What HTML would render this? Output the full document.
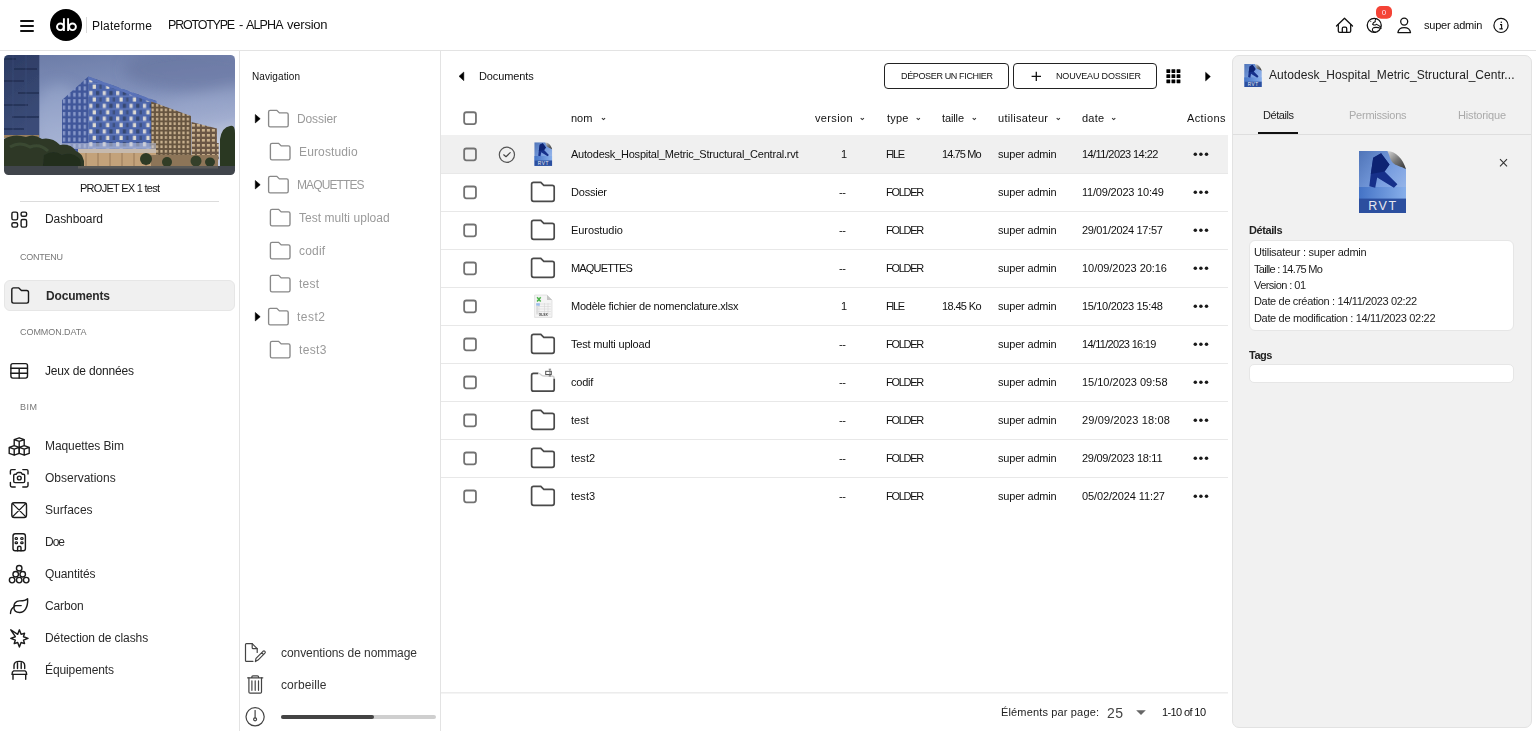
<!DOCTYPE html>
<html><head><meta charset="utf-8"><style>
html,body{margin:0;padding:0;}
body{width:1536px;height:731px;position:relative;overflow:hidden;background:#fff;font-family:"Liberation Sans",sans-serif;}
.t{position:absolute;white-space:nowrap;line-height:1;will-change:transform;}
svg{position:absolute;overflow:visible}
</style></head><body>
<div style="position:absolute;left:0;top:50px;width:1536px;height:1px;background:#e3e3e3"></div>
<div style="position:absolute;left:20px;top:20px;width:14px;height:2px;background:#111;border-radius:1px"></div>
<div style="position:absolute;left:20px;top:25px;width:14px;height:2px;background:#111;border-radius:1px"></div>
<div style="position:absolute;left:20px;top:30px;width:14px;height:2px;background:#111;border-radius:1px"></div>
<div style="position:absolute;left:50px;top:9px;width:32px;height:32px;border-radius:50%;background:#000"></div>
<svg width="40" height="40" style="position:absolute;left:46px;top:5px" viewBox="46 5 40 40"><g fill="none" stroke="#fff" stroke-width="1.9"><ellipse cx="60.4" cy="26.8" rx="3.4" ry="3.3"/><ellipse cx="72.5" cy="26.8" rx="3.4" ry="3.3"/><path d="M63.9 18.2 V31.1 M68.1 18.2 V31.1"/></g></svg>
<div style="position:absolute;left:86px;top:17px;width:1px;height:16px;background:#dadada"></div>
<div class="t" style="left:91.80px;top:19.54px;font-size:12px;color:#111;letter-spacing:0.219px;">Plateforme</div>
<div class="t" style="left:168.40px;top:18.72px;font-size:12.5px;color:#111;letter-spacing:-1.208px;">PROTOTYPE</div>
<div class="t" style="left:239.00px;top:18.30px;font-size:13px;color:#111;">-</div>
<div class="t" style="left:246.10px;top:18.72px;font-size:12.5px;color:#111;letter-spacing:-0.873px;">ALPHA</div>
<div class="t" style="left:287.20px;top:18.30px;font-size:13px;color:#111;letter-spacing:-0.218px;">version</div>
<div class="t" style="left:1423.50px;top:19.69px;font-size:11px;color:#111;letter-spacing:-0.213px;">super admin</div>
<div style="position:absolute;left:239px;top:51px;width:1px;height:680px;background:#e3e3e3"></div>
<div class="t" style="left:79.70px;top:182.69px;font-size:11px;color:#111;letter-spacing:-0.726px;">PROJET EX 1 test</div>
<div style="position:absolute;left:20px;top:201px;width:199px;height:1px;background:#dcdcdc"></div>
<div class="t" style="left:45.00px;top:213.44px;font-size:12px;color:#222;letter-spacing:-0.088px;">Dashboard</div>
<div class="t" style="left:19.90px;top:252.58px;font-size:9px;color:#777;letter-spacing:-0.250px;">CONTENU</div>
<div style="position:absolute;left:4px;top:280px;width:229px;height:29px;border:1px solid #e6e6e6;background:#f0f0f0;border-radius:6px"></div>
<div class="t" style="left:45.50px;top:289.64px;font-size:12px;color:#2a2a2a;letter-spacing:-0.168px;font-weight:bold;">Documents</div>
<div class="t" style="left:20.00px;top:327.88px;font-size:9px;color:#777;letter-spacing:-0.056px;">COMMON.DATA</div>
<div class="t" style="left:45.00px;top:365.24px;font-size:12px;color:#222;letter-spacing:-0.172px;">Jeux de données</div>
<div class="t" style="left:20.00px;top:402.98px;font-size:9px;color:#777;letter-spacing:0.500px;">BIM</div>
<div class="t" style="left:45.00px;top:440.14px;font-size:12px;color:#2a2a2a;letter-spacing:-0.095px;">Maquettes Bim</div>
<div class="t" style="left:45.00px;top:472.14px;font-size:12px;color:#2a2a2a;">Observations</div>
<div class="t" style="left:45.00px;top:504.14px;font-size:12px;color:#2a2a2a;letter-spacing:0.035px;">Surfaces</div>
<div class="t" style="left:45.00px;top:536.14px;font-size:12px;color:#2a2a2a;letter-spacing:-1.007px;">Doe</div>
<div class="t" style="left:45.00px;top:568.14px;font-size:12px;color:#2a2a2a;letter-spacing:-0.108px;">Quantités</div>
<div class="t" style="left:45.00px;top:600.14px;font-size:12px;color:#2a2a2a;letter-spacing:-0.152px;">Carbon</div>
<div class="t" style="left:45.00px;top:632.14px;font-size:12px;color:#2a2a2a;letter-spacing:-0.085px;">Détection de clashs</div>
<div class="t" style="left:45.00px;top:664.14px;font-size:12px;color:#2a2a2a;letter-spacing:-0.105px;">Équipements</div>
<div style="position:absolute;left:440px;top:51px;width:1px;height:680px;background:#e3e3e3"></div>
<div class="t" style="left:252.10px;top:71.63px;font-size:10px;color:#111;letter-spacing:0.083px;">Navigation</div>
<div class="t" style="left:297.00px;top:112.64px;font-size:12px;color:#9a9a9a;letter-spacing:-0.113px;">Dossier</div>
<div class="t" style="left:298.80px;top:145.64px;font-size:12px;color:#9a9a9a;letter-spacing:0.136px;">Eurostudio</div>
<div class="t" style="left:297.00px;top:178.64px;font-size:12px;color:#9a9a9a;letter-spacing:-0.884px;">MAQUETTES</div>
<div class="t" style="left:298.80px;top:211.64px;font-size:12px;color:#9a9a9a;letter-spacing:0.040px;">Test multi upload</div>
<div class="t" style="left:298.80px;top:244.64px;font-size:12px;color:#9a9a9a;letter-spacing:0.188px;">codif</div>
<div class="t" style="left:298.80px;top:277.64px;font-size:12px;color:#9a9a9a;letter-spacing:0.286px;">test</div>
<div class="t" style="left:297.00px;top:310.64px;font-size:12px;color:#9a9a9a;letter-spacing:0.471px;">test2</div>
<div class="t" style="left:298.80px;top:343.64px;font-size:12px;color:#9a9a9a;letter-spacing:0.346px;">test3</div>
<div class="t" style="left:281.00px;top:646.54px;font-size:12px;color:#333;letter-spacing:-0.068px;">conventions de nommage</div>
<div class="t" style="left:281.00px;top:678.64px;font-size:12px;color:#333;letter-spacing:0.088px;">corbeille</div>
<div style="position:absolute;left:281px;top:715px;width:155px;height:4px;background:#cfcfcf;border-radius:2px"></div>
<div style="position:absolute;left:281px;top:715px;width:93px;height:4px;background:#444;border-radius:2px"></div>
<div class="t" style="left:478.70px;top:70.69px;font-size:11px;color:#111;letter-spacing:-0.117px;">Documents</div>
<div style="position:absolute;left:884px;top:63px;width:123px;height:24px;border:1px solid #222;border-radius:4px"></div>
<div class="t" style="left:900.60px;top:71.98px;font-size:9px;color:#111;letter-spacing:-0.354px;">DÉPOSER UN FICHIER</div>
<div style="position:absolute;left:1013px;top:63px;width:142px;height:24px;border:1px solid #222;border-radius:4px"></div>
<div class="t" style="left:1055.90px;top:71.98px;font-size:9px;color:#111;letter-spacing:-0.180px;">NOUVEAU DOSSIER</div>
<div class="t" style="left:570.90px;top:112.59px;font-size:11px;color:#111;">nom</div>
<div class="t" style="left:815.00px;top:112.59px;font-size:11px;color:#111;letter-spacing:0.340px;">version</div>
<div class="t" style="left:886.60px;top:112.59px;font-size:11px;color:#111;letter-spacing:0.203px;">type</div>
<div class="t" style="left:942.30px;top:112.59px;font-size:11px;color:#111;letter-spacing:-0.125px;">taille</div>
<div class="t" style="left:998.30px;top:112.59px;font-size:11px;color:#111;letter-spacing:0.292px;">utilisateur</div>
<div class="t" style="left:1082.00px;top:112.59px;font-size:11px;color:#111;letter-spacing:0.197px;">date</div>
<div class="t" style="left:1186.70px;top:112.59px;font-size:11px;color:#111;letter-spacing:0.388px;">Actions</div>
<div style="position:absolute;left:441px;top:135px;width:787px;height:38px;background:#f0f0f0"></div>
<div style="position:absolute;left:441px;top:173px;width:787px;height:1px;background:#e8e8e8"></div>
<div class="t" style="left:570.90px;top:149.39px;font-size:11px;color:#111;letter-spacing:-0.222px;">Autodesk_Hospital_Metric_Structural_Central.rvt</div>
<div class="t" style="left:841.00px;top:149.39px;font-size:11px;color:#111;">1</div>
<div class="t" style="left:886.00px;top:149.39px;font-size:11px;color:#111;letter-spacing:-1.410px;">FILE</div>
<div class="t" style="left:942.30px;top:149.39px;font-size:11px;color:#111;letter-spacing:-0.895px;">14.75 Mo</div>
<div class="t" style="left:998.30px;top:149.39px;font-size:11px;color:#111;letter-spacing:-0.183px;">super admin</div>
<div class="t" style="left:1082.40px;top:149.39px;font-size:11px;color:#111;letter-spacing:-0.568px;">14/11/2023 14:22</div>
<div style="position:absolute;left:441px;top:211px;width:787px;height:1px;background:#e8e8e8"></div>
<div class="t" style="left:570.90px;top:187.39px;font-size:11px;color:#111;letter-spacing:-0.214px;">Dossier</div>
<div class="t" style="left:839.00px;top:187.39px;font-size:11px;color:#111;letter-spacing:-0.327px;">--</div>
<div class="t" style="left:886.00px;top:187.39px;font-size:11px;color:#111;letter-spacing:-1.264px;">FOLDER</div>
<div class="t" style="left:998.30px;top:187.39px;font-size:11px;color:#111;letter-spacing:-0.183px;">super admin</div>
<div class="t" style="left:1082.40px;top:187.39px;font-size:11px;color:#111;letter-spacing:-0.202px;">11/09/2023 10:49</div>
<div style="position:absolute;left:441px;top:249px;width:787px;height:1px;background:#e8e8e8"></div>
<div class="t" style="left:570.90px;top:225.39px;font-size:11px;color:#111;letter-spacing:-0.077px;">Eurostudio</div>
<div class="t" style="left:839.00px;top:225.39px;font-size:11px;color:#111;letter-spacing:-0.327px;">--</div>
<div class="t" style="left:886.00px;top:225.39px;font-size:11px;color:#111;letter-spacing:-1.264px;">FOLDER</div>
<div class="t" style="left:998.30px;top:225.39px;font-size:11px;color:#111;letter-spacing:-0.183px;">super admin</div>
<div class="t" style="left:1082.40px;top:225.39px;font-size:11px;color:#111;letter-spacing:-0.323px;">29/01/2024 17:57</div>
<div style="position:absolute;left:441px;top:287px;width:787px;height:1px;background:#e8e8e8"></div>
<div class="t" style="left:570.90px;top:263.39px;font-size:11px;color:#111;letter-spacing:-0.819px;">MAQUETTES</div>
<div class="t" style="left:839.00px;top:263.39px;font-size:11px;color:#111;letter-spacing:-0.327px;">--</div>
<div class="t" style="left:886.00px;top:263.39px;font-size:11px;color:#111;letter-spacing:-1.264px;">FOLDER</div>
<div class="t" style="left:998.30px;top:263.39px;font-size:11px;color:#111;letter-spacing:-0.183px;">super admin</div>
<div class="t" style="left:1082.40px;top:263.39px;font-size:11px;color:#111;letter-spacing:-0.043px;">10/09/2023 20:16</div>
<div style="position:absolute;left:441px;top:325px;width:787px;height:1px;background:#e8e8e8"></div>
<div class="t" style="left:570.90px;top:301.39px;font-size:11px;color:#111;letter-spacing:-0.235px;">Modèle fichier de nomenclature.xlsx</div>
<div class="t" style="left:841.00px;top:301.39px;font-size:11px;color:#111;">1</div>
<div class="t" style="left:886.00px;top:301.39px;font-size:11px;color:#111;letter-spacing:-1.410px;">FILE</div>
<div class="t" style="left:942.30px;top:301.39px;font-size:11px;color:#111;letter-spacing:-0.634px;">18.45 Ko</div>
<div class="t" style="left:998.30px;top:301.39px;font-size:11px;color:#111;letter-spacing:-0.183px;">super admin</div>
<div class="t" style="left:1082.40px;top:301.39px;font-size:11px;color:#111;letter-spacing:-0.323px;">15/10/2023 15:48</div>
<div style="position:absolute;left:441px;top:363px;width:787px;height:1px;background:#e8e8e8"></div>
<div class="t" style="left:570.90px;top:339.39px;font-size:11px;color:#111;letter-spacing:-0.184px;">Test multi upload</div>
<div class="t" style="left:839.00px;top:339.39px;font-size:11px;color:#111;letter-spacing:-0.327px;">--</div>
<div class="t" style="left:886.00px;top:339.39px;font-size:11px;color:#111;letter-spacing:-1.264px;">FOLDER</div>
<div class="t" style="left:998.30px;top:339.39px;font-size:11px;color:#111;letter-spacing:-0.183px;">super admin</div>
<div class="t" style="left:1082.40px;top:339.39px;font-size:11px;color:#111;letter-spacing:-0.695px;">14/11/2023 16:19</div>
<div style="position:absolute;left:441px;top:401px;width:787px;height:1px;background:#e8e8e8"></div>
<div class="t" style="left:570.90px;top:377.39px;font-size:11px;color:#111;letter-spacing:-0.209px;">codif</div>
<div class="t" style="left:839.00px;top:377.39px;font-size:11px;color:#111;letter-spacing:-0.327px;">--</div>
<div class="t" style="left:886.00px;top:377.39px;font-size:11px;color:#111;letter-spacing:-1.264px;">FOLDER</div>
<div class="t" style="left:998.30px;top:377.39px;font-size:11px;color:#111;letter-spacing:-0.183px;">super admin</div>
<div class="t" style="left:1082.40px;top:377.39px;font-size:11px;color:#111;letter-spacing:-0.009px;">15/10/2023 09:58</div>
<div style="position:absolute;left:441px;top:439px;width:787px;height:1px;background:#e8e8e8"></div>
<div class="t" style="left:570.90px;top:415.39px;font-size:11px;color:#111;letter-spacing:0.057px;">test</div>
<div class="t" style="left:839.00px;top:415.39px;font-size:11px;color:#111;letter-spacing:-0.327px;">--</div>
<div class="t" style="left:886.00px;top:415.39px;font-size:11px;color:#111;letter-spacing:-1.264px;">FOLDER</div>
<div class="t" style="left:998.30px;top:415.39px;font-size:11px;color:#111;letter-spacing:-0.183px;">super admin</div>
<div class="t" style="left:1082.40px;top:415.39px;font-size:11px;color:#111;letter-spacing:0.151px;">29/09/2023 18:08</div>
<div style="position:absolute;left:441px;top:477px;width:787px;height:1px;background:#e8e8e8"></div>
<div class="t" style="left:570.90px;top:453.39px;font-size:11px;color:#111;letter-spacing:0.088px;">test2</div>
<div class="t" style="left:839.00px;top:453.39px;font-size:11px;color:#111;letter-spacing:-0.327px;">--</div>
<div class="t" style="left:886.00px;top:453.39px;font-size:11px;color:#111;letter-spacing:-1.264px;">FOLDER</div>
<div class="t" style="left:998.30px;top:453.39px;font-size:11px;color:#111;letter-spacing:-0.183px;">super admin</div>
<div class="t" style="left:1082.40px;top:453.39px;font-size:11px;color:#111;letter-spacing:-0.288px;">29/09/2023 18:11</div>
<div class="t" style="left:570.90px;top:491.39px;font-size:11px;color:#111;letter-spacing:0.088px;">test3</div>
<div class="t" style="left:839.00px;top:491.39px;font-size:11px;color:#111;letter-spacing:-0.327px;">--</div>
<div class="t" style="left:886.00px;top:491.39px;font-size:11px;color:#111;letter-spacing:-1.264px;">FOLDER</div>
<div class="t" style="left:998.30px;top:491.39px;font-size:11px;color:#111;letter-spacing:-0.183px;">super admin</div>
<div class="t" style="left:1082.40px;top:491.39px;font-size:11px;color:#111;letter-spacing:-0.122px;">05/02/2024 11:27</div>
<div style="position:absolute;left:441px;top:692px;width:787px;height:1px;background:#ececec"></div><div style="position:absolute;left:441px;top:693px;width:787px;height:1px;background:#f4f4f4"></div>
<div class="t" style="left:1001.00px;top:707.39px;font-size:11px;color:#222;letter-spacing:0.153px;">Éléments par page:</div>
<div class="t" style="left:1107.30px;top:705.55px;font-size:14px;color:#444;letter-spacing:0.428px;">25</div>
<div class="t" style="left:1161.50px;top:707.39px;font-size:11px;color:#111;letter-spacing:-0.616px;">1-10 of 10</div>
<div style="position:absolute;left:1232px;top:55px;width:298px;height:671px;background:#f1f1f1;border:1px solid #e2e2e2;border-radius:7px"></div>
<div class="t" style="left:1269.20px;top:68.64px;font-size:12px;color:#222;letter-spacing:0.063px;">Autodesk_Hospital_Metric_Structural_Centr...</div>
<div class="t" style="left:1262.70px;top:109.59px;font-size:11px;color:#222;letter-spacing:-0.437px;">Détails</div>
<div class="t" style="left:1349.00px;top:109.59px;font-size:11px;color:#aaa;letter-spacing:-0.240px;">Permissions</div>
<div class="t" style="left:1457.80px;top:109.59px;font-size:11px;color:#aaa;letter-spacing:-0.169px;">Historique</div>
<div style="position:absolute;left:1233px;top:134px;width:298px;height:1px;background:#dedede"></div>
<div style="position:absolute;left:1258px;top:132px;width:40px;height:2px;background:#111"></div>
<div class="t" style="left:1249.00px;top:225.29px;font-size:11px;color:#222;letter-spacing:-0.429px;font-weight:bold;">Détails</div>
<div style="position:absolute;left:1249px;top:240px;width:263px;height:89px;background:#fff;border:1px solid #e6e6e6;border-radius:6px"></div>
<div class="t" style="left:1253.60px;top:247.29px;font-size:11px;color:#222;letter-spacing:-0.250px;">Utilisateur : super admin</div>
<div class="t" style="left:1253.60px;top:263.69px;font-size:11px;color:#222;letter-spacing:-0.700px;">Taille : 14.75 Mo</div>
<div class="t" style="left:1253.60px;top:280.09px;font-size:11px;color:#222;letter-spacing:-0.554px;">Version : 01</div>
<div class="t" style="left:1253.60px;top:296.49px;font-size:11px;color:#222;letter-spacing:-0.339px;">Date de création : 14/11/2023 02:22</div>
<div class="t" style="left:1253.60px;top:312.89px;font-size:11px;color:#222;letter-spacing:-0.336px;">Date de modification : 14/11/2023 02:22</div>
<div class="t" style="left:1249.00px;top:350.19px;font-size:11px;color:#222;letter-spacing:-0.486px;font-weight:bold;">Tags</div>
<div style="position:absolute;left:1249px;top:364px;width:263px;height:17px;background:#fff;border:1px solid #e6e6e6;border-radius:5px"></div>
<svg width="231" height="120" viewBox="0 0 231 120" style="position:absolute;left:4px;top:55px">
<defs>
<filter id="cblur" x="-50%" y="-50%" width="200%" height="200%"><feGaussianBlur stdDeviation="7"/></filter>
<filter id="sblur"><feGaussianBlur stdDeviation="0.35"/></filter>
<clipPath id="bclip"><rect x="0" y="0" width="231" height="120" rx="4.5"/></clipPath>
<linearGradient id="sky" x1="0" y1="0" x2="0.25" y2="1">
 <stop offset="0" stop-color="#6b7ba6"/><stop offset="0.4" stop-color="#8191bb"/><stop offset="0.72" stop-color="#a2aed0"/><stop offset="0.9" stop-color="#c3cadc"/>
</linearGradient>
<linearGradient id="tower" x1="0" y1="0" x2="0.3" y2="1">
 <stop offset="0" stop-color="#2c3b63"/><stop offset="1" stop-color="#3b4c78"/>
</linearGradient>
<pattern id="winB" patternUnits="userSpaceOnUse" width="13.4" height="12.8" x="84.3" y="22">
 <rect width="13.4" height="12.8" fill="#4d66ab"/>
 <rect x="1" y="1.2" width="3.2" height="4.2" fill="#d8d6d6"/>
 <rect x="7.7" y="1.2" width="3.2" height="4.2" fill="#35466e"/>
 <rect x="4.4" y="7.6" width="3.2" height="4.2" fill="#e0dcd2"/>
 <rect x="11" y="7.6" width="2.4" height="4.2" fill="#3d4f7c"/>
 <rect x="0" y="5.8" width="13.4" height="0.8" fill="#6b83c4"/>
</pattern>
<pattern id="winBL" patternUnits="userSpaceOnUse" width="5.2" height="6.4" x="58" y="24">
 <rect width="5.2" height="6.4" fill="#40579a"/>
 <rect x="0.8" y="1" width="2.4" height="4" fill="#8697c8"/>
</pattern>
<pattern id="winW" patternUnits="userSpaceOnUse" width="4.4" height="4.6" x="151" y="48">
 <rect width="4.4" height="4.6" fill="#66543f"/>
 <rect x="1" y="0.9" width="2.2" height="2.8" fill="#c9b290"/>
</pattern>
<pattern id="winW2" patternUnits="userSpaceOnUse" width="5" height="5" x="187" y="68">
 <rect width="5" height="5" fill="#6a5645"/>
 <rect x="0.9" y="1" width="3" height="2.6" fill="#c8b08c"/>
</pattern>
</defs>
<g clip-path="url(#bclip)"><g filter="url(#sblur)">
<rect width="231" height="120" fill="url(#sky)"/>
<g filter="url(#cblur)"><ellipse cx="190" cy="15" rx="70" ry="22" fill="#5f6d96" opacity="0.45"/>
<ellipse cx="55" cy="60" rx="25" ry="30" fill="#a8b6d8" opacity="0.45"/>
<ellipse cx="200" cy="48" rx="40" ry="8" fill="#9aa8cc" opacity="0.4" transform="rotate(-18 200 48)"/></g>
<rect x="0" y="0" width="35.3" height="82.5" fill="url(#tower)"/>
<path d="M0 4 H12 M10 14 H33 M0 26 H20 M14 38 H35 M0 50 H24 M8 62 H35 M0 74 H20" stroke="#1e2a4c" stroke-width="1.5" opacity="0.8"/>
<path d="M9 0 V82 M22 0 V82" stroke="#40517f" stroke-width="0.7" opacity="0.7"/>
<rect x="0" y="80" width="35" height="3" fill="#9a8060"/>
<polygon points="58,45 84.3,21.5 84.3,100 58,93.5" fill="url(#winBL)"/>
<polygon points="84.3,21.5 152.3,46 152.3,101 84.3,100" fill="url(#winB)"/>
<polygon points="84.3,21.5 152.3,46 152.3,49 84.3,24.5" fill="#5a72b8"/>
<polygon points="147.2,46.4 187,60.9 187,110 147.2,110" fill="url(#winW)"/>
<polygon points="187.6,66.9 212.9,73.5 212.9,88 214.7,88 214.7,105 187.6,110" fill="url(#winW2)"/>
<rect x="58" y="88" width="94" height="6" fill="#c4cade" opacity="0.55"/>
<rect x="74" y="94" width="78" height="18" fill="#c3a27a"/>
<rect x="74" y="94" width="78" height="4" fill="#c8c4c4" opacity="0.7"/>
<path d="M82 98 V112 M94 98 V112 M106 98 V112 M118 98 V112 M130 98 V112 M142 98 V112" stroke="#8d7050" stroke-width="0.8"/>
<rect x="147" y="100" width="67" height="11" fill="#8d7558"/>
<path d="M0 84 Q10 78 22 82 Q30 78 38 84 Q48 82 56 90 Q66 88 72 96 Q78 98 80 106 L80 120 H0 Z" fill="#2d3928"/>
<path d="M6 92 Q16 86 26 92 Q36 88 44 96" stroke="#44533a" stroke-width="3" fill="none" opacity="0.6"/>
<path d="M40 100 Q50 94 58 100 Q68 96 76 104 L78 120 H38 Z" fill="#232d1f"/>
<ellipse cx="142" cy="104" rx="6" ry="6" fill="#2f3b27"/>
<ellipse cx="163" cy="107" rx="5" ry="5" fill="#313d28"/>
<ellipse cx="192" cy="106" rx="5.5" ry="5.5" fill="#34402a"/>
<ellipse cx="206" cy="107" rx="5" ry="4.5" fill="#2f3b27"/>
<path d="M216 120 V84 Q218 72 226 71 Q231 69 231 78 V120 Z" fill="#2c3824"/>
<rect x="0" y="111" width="231" height="9" fill="#40444c"/>
<rect x="74" y="111" width="140" height="2.5" fill="#5a5a58"/>
</g></g>
</svg>
<svg width="1536" height="731" style="position:absolute;left:0;top:0"><defs>
<linearGradient id="rvtBody" x1="0" y1="0" x2="1" y2="1">
 <stop offset="0" stop-color="#4f74b8"/><stop offset="0.5" stop-color="#7a9fe0"/><stop offset="1" stop-color="#a9c4ef"/>
</linearGradient>
<linearGradient id="rvtLow" x1="0" y1="0" x2="1" y2="0">
 <stop offset="0" stop-color="#3f6fc4"/><stop offset="1" stop-color="#86aeea"/>
</linearGradient>
<linearGradient id="rvtFold" x1="0" y1="0" x2="1" y2="1">
 <stop offset="0" stop-color="#d8d8d8"/><stop offset="0.5" stop-color="#777"/><stop offset="1" stop-color="#333"/>
</linearGradient>
<symbol id="rvt" viewBox="0 0 47 62">
 <path d="M0 0 H28.5 L47 18 V62 H0 Z" fill="url(#rvtBody)"/>
 <rect x="0" y="36" width="47" height="12" fill="url(#rvtLow)" opacity="0.9"/>
 <rect x="0" y="47.6" width="47" height="14.4" fill="#2c4f9f"/>
 <path d="M28.5 0 C37 0.5 44 8 47 18 C42 15.5 36.5 14.5 34 12 C31 9 30.5 4 28.5 0 Z" fill="url(#rvtFold)"/>
 <path d="M14.2 6.7 L22.1 2.3 L30.5 13.6 L25.6 20.5 L38.4 33.3 L34.9 36.8 L18.2 26.4 L16.2 36.8 L10.3 35.3 L11.8 22.9 Z" fill="#16308a"/>
 <path d="M14.2 6.7 L22.1 2.3 L30.5 13.6 L25.6 20.5 L11.8 22.9 Z" fill="#0d2373"/>
 <text x="24" y="59" font-family="Liberation Sans" font-size="12.5" fill="#e8e8f0" text-anchor="middle" letter-spacing="1.6">RVT</text>
</symbol>
</defs><g fill="none" stroke-linecap="round" stroke-linejoin="round" stroke="#111" stroke-width="1.3"><path d="M1336.5 26 L1344.5 18.3 L1352.5 26"/><path d="M1338.3 24.5 V31 Q1338.3 32.4 1339.7 32.4 H1349.3 Q1350.7 32.4 1350.7 31 V24.5"/><path d="M1342.3 32.4 V28.6 Q1342.3 27.2 1343.5 27.2 H1345.5 Q1346.7 27.2 1346.7 28.6 V32.4"/><circle cx="1374.25" cy="25.35" r="7.0"/><path d="M1376 18.6 Q1374.5 20.5 1375.3 21.6 Q1373 22.2 1372.6 24.3 Q1374.5 25.8 1376.3 24.3 Q1378.5 25.2 1380.8 27" stroke-width="1.1"/><path d="M1381 28.5 Q1377 26.8 1374 27.6 Q1371.4 29 1373 31.2 Q1374.5 32.2 1375.5 32.4" stroke-width="1.1"/><circle cx="1370.8" cy="21.6" r="0.5" fill="#111" stroke="none"/><circle cx="1404.2" cy="21.6" r="3.5"/><path d="M1397.9 32.6 Q1398.5 27.6 1404.2 27.6 Q1409.9 27.6 1410.5 32.6 Z"/><circle cx="1501" cy="25.4" r="7.1" stroke-width="1.2"/></g><path d="M1500 24.6 H1501.6 V28.6 M1499.4 28.9 H1502.8" stroke="#111" stroke-width="1.1" fill="none"/><circle cx="1501.3" cy="22.3" r="0.75" fill="#111"/><rect x="1376" y="6" width="16" height="12.8" rx="5" fill="#f44336"/><text x="1384" y="15" font-family="Liberation Sans" font-size="8" fill="#fde" text-anchor="middle">0</text><g fill="none" stroke-linecap="round" stroke-linejoin="round" stroke="#1a1a1a" stroke-width="1.4"><rect x="11.9" y="212.1" width="5.7" height="7.8" rx="1.6"/><rect x="21.1" y="212.1" width="5.5" height="4.1" rx="1.5"/><rect x="11.9" y="222.8" width="5.7" height="4.3" rx="1.5"/><rect x="21.1" y="219.5" width="5.5" height="7.6" rx="1.6"/><path d="M11.8 301.3 V289.7 Q11.8 287.9 13.600000000000001 287.9 H18.8 L21.400000000000002 290.5 H26.7 Q28.5 290.5 28.5 292.3 V301.3 Q28.5 303.1 26.7 303.1 H13.600000000000001 Q11.8 303.1 11.8 301.3 Z"/><rect x="10.9" y="363.6" width="16.6" height="14.5" rx="2"/><path d="M10.9 368.2 H27.5 M10.9 373.3 H27.5 M19.2 368.2 V378.1"/><path d="M14.2 439.6 L19.2 437.8 L24.2 439.6 L19.2 441.40000000000003 Z M14.2 439.6 V445.1 M24.2 439.6 V445.1 M19.2 441.40000000000003 V447.40000000000003"/><path d="M9.2 447.40000000000003 L14.2 445.6 L19.2 447.40000000000003 L14.2 449.20000000000005 Z M9.2 447.40000000000003 V453.40000000000003 L14.2 455.20000000000005 L19.2 453.40000000000003 V447.40000000000003 M14.2 449.20000000000005 V455.20000000000005"/><path d="M19.2 447.40000000000003 L24.2 445.6 L29.2 447.40000000000003 L24.2 449.20000000000005 Z M19.2 447.40000000000003 V453.40000000000003 L24.2 455.20000000000005 L29.2 453.40000000000003 V447.40000000000003 M24.2 449.20000000000005 V455.20000000000005"/><path d="M10.4 474 V471 Q10.4 469.6 11.8 469.6 H15.2 M22.8 469.6 H26.6 Q28 469.6 28 471 V474 M10.4 482.5 V485.6 Q10.4 487 11.8 487 H15.2 M22.8 487 H26.6 Q28 487 28 485.6 V482.5"/><path d="M13.7 475.6 Q13.7 474.3 15 474.3 H16.3 Q17 472.5 18.2 472.5 H20.4 Q21.6 472.5 22.2 474.3 H23.4 Q24.7 474.3 24.7 475.6 V481.3 Q24.7 482.6 23.4 482.6 H15 Q13.7 482.6 13.7 481.3 Z"/><circle cx="19.3" cy="478" r="1.9"/><rect x="11.8" y="502.8" width="14.7" height="14.7" rx="2.4"/><path d="M12.4 503.4 L25.9 516.9 M25.9 503.4 L12.4 516.9" stroke-width="1.2"/><rect x="13" y="533.7" width="12.4" height="17" rx="2.2"/><path d="M17.6 550.7 V547.6 Q17.6 546.3 19.3 546.3 Q21 546.3 21 547.6 V550.7"/><rect x="15.100000000000001" y="537.5" width="2.4" height="1.8" rx="0.9" stroke-width="1.2"/><rect x="20.7" y="537.5" width="2.4" height="1.8" rx="0.9" stroke-width="1.2"/><rect x="15.100000000000001" y="541.9" width="2.4" height="1.8" rx="0.9" stroke-width="1.2"/><rect x="20.7" y="541.9" width="2.4" height="1.8" rx="0.9" stroke-width="1.2"/><circle cx="19.2" cy="568.3" r="2.75"/><circle cx="15.7" cy="574.2" r="2.75"/><circle cx="22.7" cy="574.2" r="2.75"/><circle cx="12.1" cy="580.1" r="2.75"/><circle cx="19.2" cy="580.1" r="2.75"/><circle cx="26.2" cy="580.1" r="2.75"/><path d="M27.6 598.8 C25.5 601 22.5 600.9 19.5 600.9 C15.8 601 13.6 603.8 13.8 607.2 C14 610.6 16.6 612.5 19.6 612.5 C24.5 612.4 28.2 607.5 27.6 598.8 Z"/><path d="M14.5 605.6 H21.2 M14.6 606.6 C11.8 607.8 10.5 610.8 10.5 613.6"/><path d="M19.40 629.80 L21.08 634.33 L24.56 633.24 L23.47 636.72 L28.00 638.40 L23.47 640.08 L24.56 643.56 L21.08 642.47 L19.40 647.00 L17.72 642.47 L14.24 643.56 L15.33 640.08 L10.80 638.40 L15.33 636.72 L10.77 629.77 L17.72 634.33 Z" stroke-width="1.4"/><path d="M14 668.5 V665.5 Q14 661.4 19.35 661.4 Q24.7 661.4 24.7 665.5 V668.5 M17.5 663 V668.5 M21.2 663 V668.5"/><path d="M13.6 670.9 H25.1 Q26.7 671.6 26.7 674.4 H12 Q12 671.6 13.6 670.9 Z"/><path d="M13 674.5 V679.2 M25.7 674.5 V679.2"/></g><path d="M255.3 114.5 L260.2 118.7 L255.3 122.9 Z" fill="#000" stroke="#000" stroke-width="0.6" stroke-linejoin="round"/><path d="M268.6 125.30000000000001 V111.89999999999999 Q268.6 110.3 270.20000000000005 110.3 H276.8 L279.40000000000003 112.89999999999999 H286.6 Q288.20000000000005 112.89999999999999 288.20000000000005 114.49999999999999 V125.30000000000001 Q288.20000000000005 126.9 286.6 126.9 H270.20000000000005 Q268.6 126.9 268.6 125.30000000000001 Z" fill="none" stroke="#888" stroke-width="1.35"/><path d="M270.4 158.29999999999998 V144.89999999999998 Q270.4 143.29999999999998 272.0 143.29999999999998 H278.59999999999997 L281.2 145.89999999999998 H288.4 Q290.0 145.89999999999998 290.0 147.49999999999997 V158.29999999999998 Q290.0 159.89999999999998 288.4 159.89999999999998 H272.0 Q270.4 159.89999999999998 270.4 158.29999999999998 Z" fill="none" stroke="#888" stroke-width="1.35"/><path d="M255.3 180.5 L260.2 184.7 L255.3 188.89999999999998 Z" fill="#000" stroke="#000" stroke-width="0.6" stroke-linejoin="round"/><path d="M268.6 191.29999999999998 V177.89999999999998 Q268.6 176.29999999999998 270.20000000000005 176.29999999999998 H276.8 L279.40000000000003 178.89999999999998 H286.6 Q288.20000000000005 178.89999999999998 288.20000000000005 180.49999999999997 V191.29999999999998 Q288.20000000000005 192.89999999999998 286.6 192.89999999999998 H270.20000000000005 Q268.6 192.89999999999998 268.6 191.29999999999998 Z" fill="none" stroke="#888" stroke-width="1.35"/><path d="M270.4 224.29999999999998 V210.89999999999998 Q270.4 209.29999999999998 272.0 209.29999999999998 H278.59999999999997 L281.2 211.89999999999998 H288.4 Q290.0 211.89999999999998 290.0 213.49999999999997 V224.29999999999998 Q290.0 225.89999999999998 288.4 225.89999999999998 H272.0 Q270.4 225.89999999999998 270.4 224.29999999999998 Z" fill="none" stroke="#888" stroke-width="1.35"/><path d="M270.4 257.29999999999995 V243.89999999999998 Q270.4 242.29999999999998 272.0 242.29999999999998 H278.59999999999997 L281.2 244.89999999999998 H288.4 Q290.0 244.89999999999998 290.0 246.49999999999997 V257.29999999999995 Q290.0 258.9 288.4 258.9 H272.0 Q270.4 258.9 270.4 257.29999999999995 Z" fill="none" stroke="#888" stroke-width="1.35"/><path d="M270.4 290.29999999999995 V276.90000000000003 Q270.4 275.3 272.0 275.3 H278.59999999999997 L281.2 277.90000000000003 H288.4 Q290.0 277.90000000000003 290.0 279.50000000000006 V290.29999999999995 Q290.0 291.9 288.4 291.9 H272.0 Q270.4 291.9 270.4 290.29999999999995 Z" fill="none" stroke="#888" stroke-width="1.35"/><path d="M255.3 312.5 L260.2 316.7 L255.3 320.9 Z" fill="#000" stroke="#000" stroke-width="0.6" stroke-linejoin="round"/><path d="M268.6 323.29999999999995 V309.90000000000003 Q268.6 308.3 270.20000000000005 308.3 H276.8 L279.40000000000003 310.90000000000003 H286.6 Q288.20000000000005 310.90000000000003 288.20000000000005 312.50000000000006 V323.29999999999995 Q288.20000000000005 324.9 286.6 324.9 H270.20000000000005 Q268.6 324.9 268.6 323.29999999999995 Z" fill="none" stroke="#888" stroke-width="1.35"/><path d="M270.4 356.29999999999995 V342.90000000000003 Q270.4 341.3 272.0 341.3 H278.59999999999997 L281.2 343.90000000000003 H288.4 Q290.0 343.90000000000003 290.0 345.50000000000006 V356.29999999999995 Q290.0 357.9 288.4 357.9 H272.0 Q270.4 357.9 270.4 356.29999999999995 Z" fill="none" stroke="#888" stroke-width="1.35"/><g fill="none" stroke-linecap="round" stroke-linejoin="round" stroke="#444" stroke-width="1.2"><path d="M253 661.3 H246.4 Q245.5 661.3 245.5 660.4 V644.6 Q245.5 643.7 246.4 643.7 H252.2 L257.2 648.7 V652.5"/><path d="M252.2 643.7 V647.8 Q252.2 648.7 253.1 648.7 H257.2"/><path d="M255.4 661.6 L256 658.3 L263 651.3 Q264 650.4 264.9 651.3 Q265.8 652.2 264.9 653.2 L258 660.1 Z M261.6 652.7 L263.5 654.6"/><path d="M247.6 677.8 H262.8 M251.8 677.8 V677 Q251.8 675.8 253 675.8 H257.4 Q258.6 675.8 258.6 677 V677.8"/><path d="M248.9 677.8 V692 Q248.9 693.2 250.1 693.2 H260.3 Q261.5 693.2 261.5 692 V677.8"/><path d="M251.9 680.8 V690.3 M255.2 680.8 V690.3 M258.5 680.8 V690.3"/><circle cx="255.1" cy="716.8" r="9.1"/><path d="M255.1 710.6 V717.8"/><circle cx="255.1" cy="719.3" r="1.5"/></g><path d="M463.8 72 L459 76.3 L463.8 80.7 Z" fill="#000" stroke="#000" stroke-width="0.5" stroke-linejoin="round"/><path d="M1031.6 76.4 H1041 M1036.3 71.8 V81" stroke="#111" stroke-width="1.3"/><rect x="1166.4" y="69.2" width="3.8" height="3.8" rx="0.4" fill="#000"/><rect x="1171.5" y="69.2" width="3.8" height="3.8" rx="0.4" fill="#000"/><rect x="1176.6000000000001" y="69.2" width="3.8" height="3.8" rx="0.4" fill="#000"/><rect x="1166.4" y="74.3" width="3.8" height="3.8" rx="0.4" fill="#000"/><rect x="1171.5" y="74.3" width="3.8" height="3.8" rx="0.4" fill="#000"/><rect x="1176.6000000000001" y="74.3" width="3.8" height="3.8" rx="0.4" fill="#000"/><rect x="1166.4" y="79.4" width="3.8" height="3.8" rx="0.4" fill="#000"/><rect x="1171.5" y="79.4" width="3.8" height="3.8" rx="0.4" fill="#000"/><rect x="1176.6000000000001" y="79.4" width="3.8" height="3.8" rx="0.4" fill="#000"/><path d="M1205.6 72.3 L1210.4 76.6 L1205.6 80.9 Z" fill="#000" stroke="#000" stroke-width="0.5" stroke-linejoin="round"/><path d="M601.9 118.2 L603.5 119.6 L605.1 118.2" fill="none" stroke="#333" stroke-width="1.1"/><path d="M860.6999999999999 118.2 L862.3 119.6 L863.9 118.2" fill="none" stroke="#333" stroke-width="1.1"/><path d="M916.6999999999999 118.2 L918.3 119.6 L919.9 118.2" fill="none" stroke="#333" stroke-width="1.1"/><path d="M972.6999999999999 118.2 L974.3 119.6 L975.9 118.2" fill="none" stroke="#333" stroke-width="1.1"/><path d="M1056.7 118.2 L1058.3 119.6 L1059.8999999999999 118.2" fill="none" stroke="#333" stroke-width="1.1"/><path d="M1112.1000000000001 118.2 L1113.7 119.6 L1115.3 118.2" fill="none" stroke="#333" stroke-width="1.1"/><rect x="464.15" y="112.25" width="11.8" height="11.8" rx="2.2" fill="none" stroke="#727272" stroke-width="1.8"/><rect x="464.15" y="148.50" width="11.8" height="11.8" rx="2.2" fill="none" stroke="#727272" stroke-width="1.8"/><rect x="464.15" y="186.50" width="11.8" height="11.8" rx="2.2" fill="none" stroke="#727272" stroke-width="1.8"/><rect x="464.15" y="224.50" width="11.8" height="11.8" rx="2.2" fill="none" stroke="#727272" stroke-width="1.8"/><rect x="464.15" y="262.50" width="11.8" height="11.8" rx="2.2" fill="none" stroke="#727272" stroke-width="1.8"/><rect x="464.15" y="300.50" width="11.8" height="11.8" rx="2.2" fill="none" stroke="#727272" stroke-width="1.8"/><rect x="464.15" y="338.50" width="11.8" height="11.8" rx="2.2" fill="none" stroke="#727272" stroke-width="1.8"/><rect x="464.15" y="376.50" width="11.8" height="11.8" rx="2.2" fill="none" stroke="#727272" stroke-width="1.8"/><rect x="464.15" y="414.50" width="11.8" height="11.8" rx="2.2" fill="none" stroke="#727272" stroke-width="1.8"/><rect x="464.15" y="452.50" width="11.8" height="11.8" rx="2.2" fill="none" stroke="#727272" stroke-width="1.8"/><rect x="464.15" y="490.50" width="11.8" height="11.8" rx="2.2" fill="none" stroke="#727272" stroke-width="1.8"/><circle cx="506.9" cy="154.8" r="7.6" fill="none" stroke="#555" stroke-width="1.2"/><path d="M503.7 154.8 L506 156.7 L510.2 152.6" fill="none" stroke="#444" stroke-width="1.2" stroke-linecap="round" stroke-linejoin="round"/><use href="#rvt" x="534.2" y="142.3" width="18.1" height="23.6" preserveAspectRatio="none"/><use href="#rvt" x="1244" y="64" width="18" height="23" preserveAspectRatio="none"/><use href="#rvt" x="1359" y="151" width="47" height="62" preserveAspectRatio="none"/><circle cx="1195.3" cy="154.3" r="1.75" fill="#1a1a1a"/><circle cx="1200.8999999999999" cy="154.3" r="1.75" fill="#1a1a1a"/><circle cx="1206.5" cy="154.3" r="1.75" fill="#1a1a1a"/><path d="M531.6 199.3 V184.3 Q531.6 182.3 533.6 182.3 H540.8000000000001 L543.8000000000001 185.3 H552.2 Q554.2 185.3 554.2 187.3 V199.3 Q554.2 201.3 552.2 201.3 H533.6 Q531.6 201.3 531.6 199.3 Z" fill="none" stroke="#4a4a4a" stroke-width="1.7"/><circle cx="1195.3" cy="192.3" r="1.75" fill="#1a1a1a"/><circle cx="1200.8999999999999" cy="192.3" r="1.75" fill="#1a1a1a"/><circle cx="1206.5" cy="192.3" r="1.75" fill="#1a1a1a"/><path d="M531.6 237.3 V222.3 Q531.6 220.3 533.6 220.3 H540.8000000000001 L543.8000000000001 223.3 H552.2 Q554.2 223.3 554.2 225.3 V237.3 Q554.2 239.3 552.2 239.3 H533.6 Q531.6 239.3 531.6 237.3 Z" fill="none" stroke="#4a4a4a" stroke-width="1.7"/><circle cx="1195.3" cy="230.3" r="1.75" fill="#1a1a1a"/><circle cx="1200.8999999999999" cy="230.3" r="1.75" fill="#1a1a1a"/><circle cx="1206.5" cy="230.3" r="1.75" fill="#1a1a1a"/><path d="M531.6 275.3 V260.3 Q531.6 258.3 533.6 258.3 H540.8000000000001 L543.8000000000001 261.3 H552.2 Q554.2 261.3 554.2 263.3 V275.3 Q554.2 277.3 552.2 277.3 H533.6 Q531.6 277.3 531.6 275.3 Z" fill="none" stroke="#4a4a4a" stroke-width="1.7"/><circle cx="1195.3" cy="268.3" r="1.75" fill="#1a1a1a"/><circle cx="1200.8999999999999" cy="268.3" r="1.75" fill="#1a1a1a"/><circle cx="1206.5" cy="268.3" r="1.75" fill="#1a1a1a"/><circle cx="1195.3" cy="306.3" r="1.75" fill="#1a1a1a"/><circle cx="1200.8999999999999" cy="306.3" r="1.75" fill="#1a1a1a"/><circle cx="1206.5" cy="306.3" r="1.75" fill="#1a1a1a"/><path d="M531.6 351.3 V336.3 Q531.6 334.3 533.6 334.3 H540.8000000000001 L543.8000000000001 337.3 H552.2 Q554.2 337.3 554.2 339.3 V351.3 Q554.2 353.3 552.2 353.3 H533.6 Q531.6 353.3 531.6 351.3 Z" fill="none" stroke="#4a4a4a" stroke-width="1.7"/><circle cx="1195.3" cy="344.3" r="1.75" fill="#1a1a1a"/><circle cx="1200.8999999999999" cy="344.3" r="1.75" fill="#1a1a1a"/><circle cx="1206.5" cy="344.3" r="1.75" fill="#1a1a1a"/><path d="M554.2 378.59999999999997 V389.2 Q554.2 391.2 552.2 391.2 H533.6 Q531.6 391.2 531.6 389.2 V375.4 Q531.6 373.4 533.6 373.4 H538.4" fill="none" stroke="#4a4a4a" stroke-width="1.7"/><path d="M538.4 373.4 Q540 373.4 541 374.79999999999995 Q542 376.0 544 376.0 H551.5 Q554.2 376.0 554.2 378.59999999999997" fill="none" stroke="#d0d0d0" stroke-width="1.4"/><rect x="545.7" y="371.29999999999995" width="5.6" height="3.2" fill="#fff" stroke="#555" stroke-width="1"/><path d="M549.9 369.2 V376.0 M548.7 369.2 H551.1 M548.7 376.0 H551.1" stroke="#666" stroke-width="0.8"/><circle cx="1195.3" cy="382.3" r="1.75" fill="#1a1a1a"/><circle cx="1200.8999999999999" cy="382.3" r="1.75" fill="#1a1a1a"/><circle cx="1206.5" cy="382.3" r="1.75" fill="#1a1a1a"/><path d="M531.6 427.3 V412.3 Q531.6 410.3 533.6 410.3 H540.8000000000001 L543.8000000000001 413.3 H552.2 Q554.2 413.3 554.2 415.3 V427.3 Q554.2 429.3 552.2 429.3 H533.6 Q531.6 429.3 531.6 427.3 Z" fill="none" stroke="#4a4a4a" stroke-width="1.7"/><circle cx="1195.3" cy="420.3" r="1.75" fill="#1a1a1a"/><circle cx="1200.8999999999999" cy="420.3" r="1.75" fill="#1a1a1a"/><circle cx="1206.5" cy="420.3" r="1.75" fill="#1a1a1a"/><path d="M531.6 465.3 V450.3 Q531.6 448.3 533.6 448.3 H540.8000000000001 L543.8000000000001 451.3 H552.2 Q554.2 451.3 554.2 453.3 V465.3 Q554.2 467.3 552.2 467.3 H533.6 Q531.6 467.3 531.6 465.3 Z" fill="none" stroke="#4a4a4a" stroke-width="1.7"/><circle cx="1195.3" cy="458.3" r="1.75" fill="#1a1a1a"/><circle cx="1200.8999999999999" cy="458.3" r="1.75" fill="#1a1a1a"/><circle cx="1206.5" cy="458.3" r="1.75" fill="#1a1a1a"/><path d="M531.6 503.3 V488.3 Q531.6 486.3 533.6 486.3 H540.8000000000001 L543.8000000000001 489.3 H552.2 Q554.2 489.3 554.2 491.3 V503.3 Q554.2 505.3 552.2 505.3 H533.6 Q531.6 505.3 531.6 503.3 Z" fill="none" stroke="#4a4a4a" stroke-width="1.7"/><circle cx="1195.3" cy="496.3" r="1.75" fill="#1a1a1a"/><circle cx="1200.8999999999999" cy="496.3" r="1.75" fill="#1a1a1a"/><circle cx="1206.5" cy="496.3" r="1.75" fill="#1a1a1a"/><path d="M534.6 295 H547 L552 300 V317.4 H534.6 Z" fill="#f4f4f4" stroke="#d4d4d4" stroke-width="0.6"/><path d="M547 295 V300 H552 Z" fill="#c4c4c4"/><path d="M536 304.0 H550.8" stroke="#d0d0d0" stroke-width="0.5"/><path d="M536 306.5 H550.8" stroke="#d0d0d0" stroke-width="0.5"/><path d="M536 309.0 H550.8" stroke="#d0d0d0" stroke-width="0.5"/><path d="M536 311.5 H550.8" stroke="#d0d0d0" stroke-width="0.5"/><path d="M536 314.0 H550.8" stroke="#d0d0d0" stroke-width="0.5"/><path d="M539 303 V315 M544.5 303 V315 M548 303 V315" stroke="#d0d0d0" stroke-width="0.5"/><rect x="536.2" y="303.2" width="3.6" height="2.6" fill="#9cbcec"/><rect x="536.2" y="305.8" width="2" height="8" fill="#dcdcdc"/><path d="M537.1 297.2 L540.7 301.4 M540.7 297.2 L537.1 301.4" stroke="#4ab34a" stroke-width="1.5"/><text x="543.4" y="316" font-family="Liberation Sans" font-weight="bold" font-size="3.4" fill="#444" text-anchor="middle">XLSX</text><path d="M1500 159.2 L1507 166.4 M1507 159.2 L1500 166.4" stroke="#333" stroke-width="1.1"/><path d="M1136.2 710.3 H1145.8 L1141 715 Z" fill="#666"/></svg>
</body></html>
